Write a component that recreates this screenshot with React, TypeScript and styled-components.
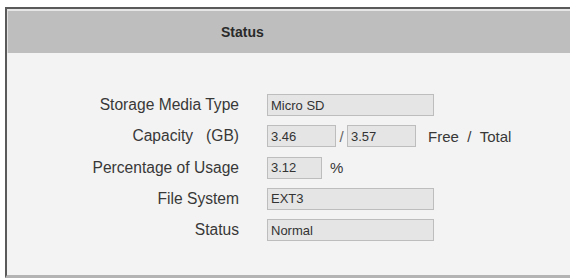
import styled, { createGlobalStyle } from "styled-components";

const GlobalStyle = createGlobalStyle`
	html, body {
		margin: 0;
		padding: 0;
		background: #ffffff;
		overflow: hidden;
	}
	body {
		font-family: "Liberation Sans", Arial, sans-serif;
	}
`;

type Row = {
	label: string;
	content: React.ReactNode;
};

const App = () => {
	const rows: Row[] = [
		{ label: "Storage Media Type", content: <Field $width={167}>Micro SD</Field> },
		{
			label: "Capacity\u00a0\u00a0\u00a0(GB)",
			content: (
				<>
					<Field $width={69}>3.46</Field>
					<Slash>/</Slash>
					<Field $width={69}>3.57</Field>
					<Unit $gap={12}>Free&nbsp;&nbsp;/&nbsp;&nbsp;Total</Unit>
				</>
			),
		},
		{
			label: "Percentage of Usage",
			content: (
				<>
					<Field $width={55}>3.12</Field>
					<Unit $gap={8}>%</Unit>
				</>
			),
		},
		{ label: "File System", content: <Field $width={167}>EXT3</Field> },
		{ label: "Status", content: <Field $width={167}>Normal</Field> },
	];

	return (
		<>
			<GlobalStyle />
			<Frame>
				<Header>Status</Header>
				<Body>
					{rows.map((row) => (
						<FormRow key={row.label}>
							<Label>{row.label}</Label>
							<Value>{row.content}</Value>
						</FormRow>
					))}
				</Body>
			</Frame>
		</>
	);
};

// the panel continues past the right edge of the shot, so no right border
const Frame = styled.div`
	margin: 7px 0 0 5px;
	border-top: 2px solid #5a5a5a;
	border-left: 2px solid #5a5a5a;
	border-bottom: 3px solid #b3b3b3;
`;

const Header = styled.div`
	display: flex;
	align-items: center;
	height: 42px;
	padding-left: 213px;
	background: #bebebe;
	border-top: 2px solid #e6e6e6;
	border-left: 1px solid #e0e0e0;
	font-size: 14px;
	font-weight: bold;
	color: #2a2a2a;
`;

const Body = styled.div`
	display: flex;
	flex-direction: column;
	gap: 9.3px;
	padding: 41px 0 34px;
	background: #f3f3f3;
`;

const FormRow = styled.div`
	display: grid;
	grid-template-columns: 232px 1fr;
	column-gap: 28px;
	align-items: center;
	height: 22px;
`;

const Label = styled.div`
	text-align: right;
	font-size: 15.6px;
	color: #383838;
	white-space: nowrap;
`;

const Value = styled.div`
	display: flex;
	align-items: center;
`;

const Field = styled.div<{ $width: number }>`
	box-sizing: border-box;
	width: ${(p) => p.$width}px;
	height: 22px;
	padding: 0 3px;
	display: flex;
	align-items: center;
	background: #e5e5e5;
	border: 1px solid #bdbdbd;
	font-size: 13px;
	color: #333333;
`;

const Slash = styled.span`
	width: 11px;
	text-align: center;
	font-size: 15px;
	color: #666666;
`;

const Unit = styled.span<{ $gap: number }>`
	margin-left: ${(p) => p.$gap}px;
	font-size: 15px;
	color: #383838;
	white-space: nowrap;
`;

export default App;
